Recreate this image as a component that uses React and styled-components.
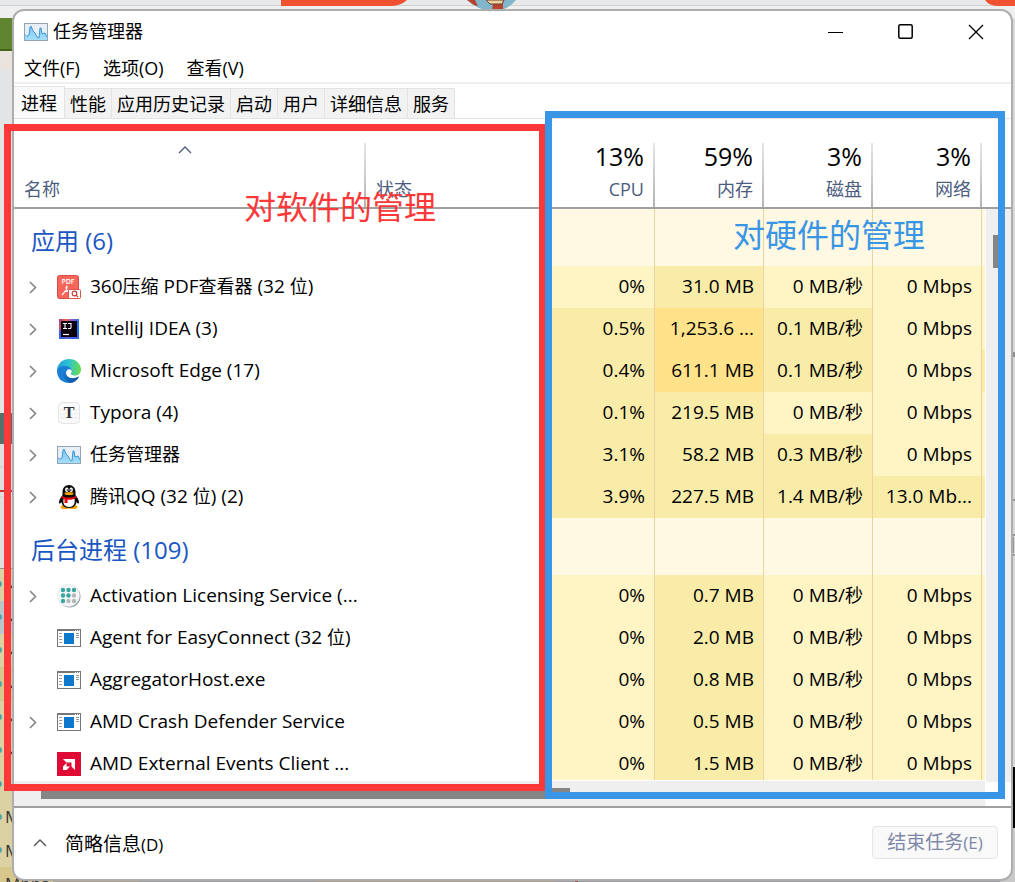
import React, { Component } from "react";
import styled, { createGlobalStyle } from "styled-components";

const GlobalStyle = createGlobalStyle`
  * {
    box-sizing: border-box;
  }
  body {
    margin: 0;
    background: #e3e4e6;
    font-family: "Open Sans", "Noto Sans CJK SC", sans-serif;
    font-size: 18px;
    color: #000;
  }
  button {
    font: inherit;
    color: inherit;
    background: none;
    border: 0;
    padding: 0;
  }
`;

const HEAT = {
  idle: "#fff8e3",
  low: "#fff4c4",
  mid: "#f9eca8",
  high: "#ffe28a"
};

const Desktop = styled.div`
  position: relative;
  height: 100vh;
  padding: 9px 2px 1px 12px;
  overflow: hidden;
`;

const Wallpaper = styled.svg`
  position: absolute;
  top: 0;
  left: 0;
`;

const Window = styled.main`
  position: relative;
  display: flex;
  flex-direction: column;
  height: 100%;
  background: #fff;
  border: 2px solid #adadad;
  border-radius: 12px;
  overflow: hidden;
`;

const TitleBar = styled.header`
  display: flex;
  align-items: center;
  height: 41px;
  flex: none;
  padding-left: 10px;
`;

const Title = styled.h1`
  flex: 1;
  margin: 0 0 0 5px;
  padding-bottom: 3px;
  font-size: 18px;
  font-weight: 400;
`;

const WindowButton = styled.button`
  display: grid;
  place-items: center;
  width: 70px;
  height: 41px;
`;

const MenuBar = styled.nav`
  display: flex;
  gap: 23px;
  flex: none;
  height: 32px;
  padding: 4px 10px 0;
  line-height: 24px;
  border-bottom: 2px solid #efefef;
`;

const MenuItem = styled.button`
  height: 24px;
  font-size: 18px;
  white-space: nowrap;
`;

const TabList = styled.div`
  display: flex;
  align-items: flex-end;
  flex: none;
  height: 35px;
  border-bottom: 1px solid #e3e3e3;
`;

const Tab = styled.button`
  height: ${props => (props.$active ? 32 : 30)}px;
  padding: 0 ${props => (props.$active ? 7 : 5)}px;
  line-height: ${props => (props.$active ? 28 : 30)}px;
  background: ${props => (props.$active ? "#f9f9f9" : "#f2f2f2")};
  border: 1px solid #e3e3e3;
  border-left-width: ${props => (props.$active ? 0 : 1)}px;
  border-bottom: 0;
  & + & {
    border-left: 0;
  }
`;

const Content = styled.section`
  display: flex;
  flex: 1;
  min-height: 0;
`;

const TableClip = styled.div`
  flex: 1;
  min-width: 0;
  overflow: hidden;
`;

const Table = styled.table`
  width: 100%;
  table-layout: fixed;
  border-collapse: separate;
  border-spacing: 0;
`;

const Col = styled.col`
  width: ${props => props.$width}px;
`;

const HeadCell = styled.th`
  height: 90px;
  padding: 0 11px 6px 10px;
  vertical-align: bottom;
  text-align: ${props => (props.$metric ? "right" : "left")};
  font-weight: 400;
  color: #4d5d80;
  line-height: 24px;
  border-bottom: 2px solid #a0a0a0;
  background: ${props =>
    props.$divider
      ? "linear-gradient(#e6e6e6, #b4b4b4) right bottom / 2px 64px no-repeat"
      : "none"};
`;

const SortButton = styled.button`
  display: flex;
  flex-direction: column;
  gap: 23px;
  width: 100%;
  padding-right: 10px;
  text-align: left;
  svg {
    align-self: center;
  }
`;

const Total = styled.div`
  margin-bottom: 5px;
  font-size: 25px;
  line-height: 32px;
  color: #000;
`;

const GroupName = styled.th`
  height: 57px;
  padding: 3px 0 0 17px;
  font-size: 24px;
  font-weight: 400;
  text-align: left;
  color: #1b57c2;
`;

const NameCell = styled.th`
  height: 42px;
  padding: 0 0 0 14px;
  font-size: 19px;
  font-weight: 400;
  line-height: 24px;
  text-align: left;
  white-space: nowrap;
`;

const NameLine = styled.div`
  display: flex;
  align-items: center;
  height: 24px;
`;

const NameText = styled.span`
  padding-bottom: 2px;
`;

const Expand = styled.button`
  display: grid;
  place-items: center;
  width: 10px;
  height: 24px;
`;

const Blank = styled.span`
  width: 10px;
`;

const IconBox = styled.span`
  display: grid;
  place-items: center;
  width: 24px;
  height: 24px;
  margin: 0 9px 0 19px;
`;

const Value = styled.td`
  padding: 0 9px 2px 0;
  font-size: 19px;
  line-height: 24px;
  text-align: right;
  white-space: nowrap;
  background: ${props => HEAT[props.$heat]};
  border-right: 1px solid #ead3a0;
`;

const Tail = styled.td`
  padding: 0;
  background: ${props => HEAT[props.$heat]};
`;

const Han = styled.span`
  font-size: 18px;
  line-height: 1;
`;

const VerticalBar = styled.div`
  flex: none;
  width: 26px;
  padding-top: 88px;
`;

const VerticalTrack = styled.div`
  display: flex;
  justify-content: center;
  height: 100%;
  padding-top: 26px;
  margin-left: 1px;
  background: #efefef;
`;

const VerticalThumb = styled.div`
  width: 12px;
  height: 33px;
  background: #858585;
`;

const VerticalHead = styled.div`
  height: 2px;
  background: #a0a0a0;
`;

const HorizontalTrack = styled.div`
  flex: none;
  height: 25px;
  margin: 1px 26px 0 0;
  padding: 7px 0 0 27px;
  background: #efefef;
`;

const HorizontalThumb = styled.div`
  width: 56%;
  height: 11px;
  background: #858585;
`;

const Footer = styled.footer`
  display: flex;
  align-items: center;
  justify-content: space-between;
  flex: none;
  height: 73px;
  padding: 0 13px 2px 18px;
  border-top: 2px solid #a0a0a0;
`;

const Details = styled.button`
  display: flex;
  align-items: center;
  gap: 17px;
`;

const FooterText = styled.span`
  font-size: 19px;
`;

const Latin = styled.span`
  font-size: 17px;
`;

const EndTask = styled.button`
  width: 126px;
  height: 33px;
  font-size: 19px;
  line-height: 30px;
  color: #7f88a6;
  background: #f9f9f9;
  border: 1px solid #e6e6e6;
  border-radius: 4px;
`;

const Frame = styled.div`
  position: absolute;
  border: 7px solid ${props => props.$color};
  pointer-events: none;
`;

const SoftwareFrame = styled(Frame)`
  top: 124px;
  bottom: 91px;
  left: 4px;
  width: 542px;
`;

const HardwareFrame = styled(Frame)`
  top: 111px;
  bottom: 83px;
  left: 545px;
  right: 10px;
`;

const Note = styled.div`
  position: absolute;
  top: ${props => props.$top}px;
  left: ${props => props.$left}px;
  font-size: 32px;
  line-height: 40px;
  white-space: nowrap;
  color: ${props => props.$color};
`;

const RED = "#fc3838";
const BLUE = "#3995e5";

const MonitorIcon = () => (
  <svg width="24" height="18" viewBox="0 0 24 18">
    <defs>
      <linearGradient id="wave" x1="0" y1="0" x2="0" y2="1">
        <stop offset="0" stopColor="#7cc6f2" />
        <stop offset="1" stopColor="#a4dffb" />
      </linearGradient>
    </defs>
    <rect x="0.5" y="0.5" width="23" height="17" fill="#e8eef5" stroke="#93a4b5" />
    <path
      d="M1 11.500l2 2 2-1.500 1-8 1-1 2 5 2 2 2 4 2 1 1-10 1 0 1 6 3-1 2 4v3H1z"
      fill="url(#wave)"
    />
    <path
      d="M1 11.500l2 2 2-1.500 1-8 1-1 2 5 2 2 2 4 2 1 1-10 1 0 1 6 3-1 2 4"
      fill="none"
      stroke="#3f97d6"
    />
  </svg>
);

const PdfIcon = () => (
  <svg width="24" height="24" viewBox="0 0 24 24">
    <rect x="0.5" y="0.5" width="21" height="23" rx="2" fill="#f8655b" stroke="#d64b43" />
    <text x="11" y="9" fontSize="7" fontWeight="600" fill="#fff" textAnchor="middle">
      PDF
    </text>
    <path
      d="M9 11c2 0 1 4-4 9M9 12c0 3 2 5 5 6M7 17l4-1"
      fill="none"
      stroke="#fff"
      strokeWidth="1.2"
    />
    <rect x="11.5" y="14.5" width="12" height="9" rx="1" fill="#fff" stroke="#d9534b" />
    <circle cx="17.5" cy="18.5" r="2.3" fill="none" stroke="#c8453f" strokeWidth="1.2" />
    <path d="M19 20l2 2" stroke="#c8453f" strokeWidth="1.2" />
  </svg>
);

const IdeaIcon = () => (
  <svg width="20" height="20" viewBox="0 0 20 20">
    <defs>
      <linearGradient id="idea" x1="0" y1="0" x2="1" y2="0.4">
        <stop offset="0" stopColor="#a13c8e" />
        <stop offset="0.35" stopColor="#f06a48" />
        <stop offset="0.55" stopColor="#8c5bc4" />
        <stop offset="1" stopColor="#087cfa" />
      </linearGradient>
    </defs>
    <rect width="20" height="20" fill="url(#idea)" />
    <path d="M0 9l7 11H0zM7 20l13-6v6z" fill="#3a5fe0" />
    <rect x="2" y="2" width="16" height="16" fill="#0c0210" />
    <path
      d="M4 4.500h4M6 4.500v5M4 9.500h4M9 4.500h3v4q0 1-1 1h-2"
      fill="none"
      stroke="#fff"
      strokeWidth="1.100"
    />
    <path d="M4 15.500h6" stroke="#fff" strokeWidth="1.200" />
  </svg>
);

const EdgeIcon = () => (
  <svg width="24" height="24" viewBox="0 0 24 24">
    <defs>
      <linearGradient id="edgeTop" x1="0" y1="0.3" x2="1" y2="0.4">
        <stop offset="0" stopColor="#1f9fe0" />
        <stop offset="0.5" stopColor="#2fc4cf" />
        <stop offset="1" stopColor="#6bdc4c" />
      </linearGradient>
      <linearGradient id="edgeLow" x1="0" y1="0" x2="1" y2="1">
        <stop offset="0" stopColor="#1c86dc" />
        <stop offset="1" stopColor="#0f4c9c" />
      </linearGradient>
    </defs>
    <path
      d="M0 12C0 5 5 0 12 0s12 5 12 10.500c0 4-3 6-6 6s-5-1-4-2.500c2-2 0-5.500-3.500-5.500C5 8.500 1 11 0 12z"
      fill="url(#edgeTop)"
    />
    <path
      d="M0 12c1-4 5-5.500 9-5 3 .3 5.500 2 6 5-2-3-6-2-6 2 0 4.500 6 7.500 13 3.500C20 22 16 24 12 24 5 24 0 19 0 12z"
      fill="#1b7fd4"
    />
    <path
      d="M9 9c-3 3-4 8 0 12 1.500 1.700 3 2.500 5 2.700 4-.5 6.500-3 8-6.200-7 3.500-13 1-13-3.500C9 12 9.500 10.500 11 10z"
      fill="url(#edgeLow)"
    />
  </svg>
);

const TyporaIcon = () => (
  <svg width="24" height="24" viewBox="0 0 24 24">
    <rect x="1.500" y="1.500" width="21" height="21" rx="4" fill="#fafafa" stroke="#e2e2e2" />
    <path d="M3 9h18M3 13h18M3 17h18" stroke="#ececec" />
    <text
      x="12"
      y="17"
      fontSize="16"
      fontWeight="700"
      fontFamily="Liberation Serif, serif"
      fill="#333"
      textAnchor="middle"
    >
      T
    </text>
  </svg>
);

const PenguinIcon = () => (
  <svg width="24" height="24" viewBox="0 0 24 24">
    <ellipse cx="8" cy="22" rx="4.500" ry="2" fill="#f5a300" />
    <ellipse cx="16" cy="22" rx="4.500" ry="2" fill="#f5a300" />
    <path
      d="M12 0C8 0 5.500 3 5.500 7v3C4 12 2 15 2 17.500c0 1.500 1 1.500 2.500-.5C5 20 7 23 12 23s7-3 7.500-6c1.500 2 2.500 2 2.500.5 0-2.500-2-5.500-3.500-7.500V7c0-4-2.500-7-6.500-7z"
      fill="#0a0a0a"
    />
    <path d="M6.500 14h11c1 5-1.500 8-5.500 8s-6.500-3-5.500-8z" fill="#fff" />
    <ellipse cx="9.800" cy="4.800" rx="1.700" ry="2.200" fill="#fff" />
    <ellipse cx="14.200" cy="4.800" rx="1.700" ry="2.200" fill="#fff" />
    <circle cx="10.300" cy="5" r="0.800" fill="#000" />
    <circle cx="13.700" cy="5" r="0.800" fill="#000" />
    <ellipse cx="12" cy="8.600" rx="4.500" ry="1.500" fill="#f5a300" />
    <path d="M5 11c4 2 10 2 14 0l.5 2c-3 1.500-6 2-9 1.700V18H7.500v-4L4.500 13z" fill="#e60012" />
  </svg>
);

const dots = [6, 11.5, 17];

const LicenseIcon = () => (
  <svg width="24" height="24" viewBox="0 0 24 24">
    <circle cx="12.500" cy="12.500" r="11" fill="#8f9da0" />
    <circle cx="11.500" cy="11.500" r="11" fill="#f6f7f8" stroke="#dde1e6" strokeWidth="0.800" />
    {dots.map((y, row) =>
      dots.map((x, col) => (
        <circle
          key={x + "-" + y}
          cx={x}
          cy={y}
          r="2.200"
          fill={row + col > 2 || (row === 2 && col > 0) ? "#b4b8ba" : "#38a69f"}
        />
      ))
    )}
  </svg>
);

const ExeIcon = () => (
  <svg width="24" height="18" viewBox="0 0 24 18">
    <rect x="0.500" y="0.500" width="23" height="17" fill="#fff" stroke="#777" />
    <path d="M1 1.500h16" stroke="#777" />
    <path d="M17 1.500h1M19 1.500h1M21 1.500h1" stroke="#777" />
    <path
      d="M2 4.500h3M2 7.500h3M2 10.500h3M2 13.500h3M19 4.500h3M19 6.500h3M19 8.500h3"
      stroke="#9a9a9a"
    />
    <rect x="7" y="4" width="10" height="11" fill="#0d78cc" />
  </svg>
);

const AmdIcon = () => (
  <svg width="24" height="24" viewBox="0 0 24 24">
    <rect width="24" height="24" fill="#df0b35" />
    <path d="M6 7h12v11l-3.500-3.500V10.500H9.500z" fill="#fff" />
    <path d="M9.500 11v3.500H13L9.500 18H6v-3.500z" fill="#fff" />
  </svg>
);

const Chevron = () => (
  <svg width="8" height="13" viewBox="0 0 8 13">
    <path d="M1 1l5.500 5.500L1 12" fill="none" stroke="#858585" strokeWidth="1.600" />
  </svg>
);

const Caret = ({ width, color }) => (
  <svg width={width} height="8" viewBox="0 0 14 8">
    <path d="M1 7l6-6 6 6" fill="none" stroke={color} strokeWidth="1.400" />
  </svg>
);

// Chinese runs are set one size under the latin ones
const Mixed = ({ text }) =>
  text
    .split(/([\u4e00-\u9fff]+)/)
    .map((part, i) => (i % 2 ? <Han key={i}>{part}</Han> : part));

const Backdrop = () => (
  <Wallpaper width="1015" height="882" viewBox="0 0 1015 882">
    <rect width="1015" height="882" fill="#e3e4e6" />
    <rect width="1015" height="5" fill="#e7e9ea" />
    <rect y="5" width="1015" height="1" fill="#d2d2d2" />
    <rect y="6" width="1015" height="12" fill="#efefef" />
    <path d="M281 0h126q-6 6-18 6H281zM985 0h30v6h-16q-10 0-14-6z" fill="#f0512f" />
    <path d="M467 0h49q-9 11-23 11T467 0z" fill="#7fb6c9" />
    <path d="M467 0h8l3 6-4-1zM493 3h10v8h-11z" fill="#b8432f" />
    <path d="M486 0h18l-2 4h-12z" fill="#efd3a0" stroke="#6b3e2c" />
    <rect y="18" width="16" height="33" fill="#5f8530" />
    <rect y="49" width="16" height="2" fill="#47641f" />
    <rect y="51" width="16" height="18" fill="#ebe4de" />
    <rect y="413" width="16" height="31" fill="#56716b" />
    <rect y="444" width="16" height="124" fill="#dedee1" />
    <path d="M0 467h16M0 497h16" stroke="#cfcfd2" />
    <rect y="490" width="16" height="2" fill="#cf3038" />
    <rect y="568" width="16" height="314" fill="#dcd1a3" />
    <rect y="568" width="16" height="1" fill="#8f8f8f" />
    <rect y="601" width="16" height="33" fill="#b9c6cc" />
    <rect y="667" width="16" height="34" fill="#d6c88c" />
    <rect y="867" width="53" height="15" fill="#d6c88c" />
    <rect x="53" y="878" width="86" height="4" fill="#a8a38a" />
    <rect x="139" y="878" width="876" height="4" fill="#9c9ca0" />
    <rect x="316" y="878" width="240" height="4" fill="#a39e85" />
    <rect x="575" y="878" width="3" height="4" fill="#a8434b" />
    {[584, 617, 650, 684, 717, 750, 784, 817, 850].map(y => (
      <circle key={y} cx="-1" cy={y} r="3" fill="#48a5ab" />
    ))}
    {[587, 620, 653, 687, 720, 753].map(y => (
      <path key={y} d={`M10 ${y + 1}l4-3`} stroke="#3a382c" strokeWidth="2" />
    ))}
    <text x="5" y="823" fontSize="17" fill="#333">
      M
    </text>
    <text x="5" y="857" fontSize="17" fill="#333">
      M
    </text>
    <text x="5" y="890" fontSize="17" fill="#333">
      Mbps
    </text>
    <rect x="1000" y="20" width="15" height="746" fill="#d8d8d8" />
    <rect x="1012" y="352" width="3" height="5" fill="#8e8e8e" />
    <path d="M1012 500h3M1012 512v10M1012 535h3M1013 537v16M1012 555h3" stroke="#555" />
    <rect x="1010" y="767" width="5" height="61" fill="#000" />
    <rect x="1000" y="828" width="15" height="54" fill="#c9c9c9" />
  </Wallpaper>
);

const TABS = ["进程", "性能", "应用历史记录", "启动", "用户", "详细信息", "服务"];

const METRICS = [
  { name: "CPU", total: "13%" },
  { name: "内存", total: "59%" },
  { name: "磁盘", total: "3%" },
  { name: "网络", total: "3%" }
];

const row = (name, icon, expandable, values, heats, tail = "low") => ({
  name,
  icon,
  expandable,
  values,
  heats,
  tail
});

const QUIET = ["low", "mid", "low", "low"];

const GROUPS = [
  {
    name: "应用 (6)",
    rows: [
      row("360压缩 PDF查看器 (32 位)", PdfIcon, true, ["0%", "31.0 MB", "0 MB/秒", "0 Mbps"], QUIET),
      row("IntelliJ IDEA (3)", IdeaIcon, true, ["0.5%", "1,253.6 ...", "0.1 MB/秒", "0 Mbps"], ["mid", "high", "mid", "low"]),
      row("Microsoft Edge (17)", EdgeIcon, true, ["0.4%", "611.1 MB", "0.1 MB/秒", "0 Mbps"], ["mid", "high", "mid", "low"], "mid"),
      row("Typora (4)", TyporaIcon, true, ["0.1%", "219.5 MB", "0 MB/秒", "0 Mbps"], ["mid", "mid", "low", "low"]),
      row("任务管理器", MonitorIcon, true, ["3.1%", "58.2 MB", "0.3 MB/秒", "0 Mbps"], ["mid", "mid", "mid", "low"]),
      row("腾讯QQ (32 位) (2)", PenguinIcon, true, ["3.9%", "227.5 MB", "1.4 MB/秒", "13.0 Mb..."], ["mid", "mid", "mid", "mid"], "mid")
    ]
  },
  {
    name: "后台进程 (109)",
    rows: [
      row("Activation Licensing Service (...", LicenseIcon, true, ["0%", "0.7 MB", "0 MB/秒", "0 Mbps"], QUIET),
      row("Agent for EasyConnect (32 位)", ExeIcon, false, ["0%", "2.0 MB", "0 MB/秒", "0 Mbps"], QUIET),
      row("AggregatorHost.exe", ExeIcon, false, ["0%", "0.8 MB", "0 MB/秒", "0 Mbps"], QUIET),
      row("AMD Crash Defender Service", ExeIcon, true, ["0%", "0.5 MB", "0 MB/秒", "0 Mbps"], QUIET),
      row("AMD External Events Client ...", AmdIcon, false, ["0%", "1.5 MB", "0 MB/秒", "0 Mbps"], QUIET)
    ]
  }
];

const ProcessRow = ({ item }) => {
  const Icon = item.icon;
  return (
    <tr>
      <NameCell scope="row">
        <NameLine>
          {item.expandable ? (
            <Expand aria-label={"展开 " + item.name}>
              <Chevron />
            </Expand>
          ) : (
            <Blank />
          )}
          <IconBox>
            <Icon />
          </IconBox>
          <NameText>
            <Mixed text={item.name} />
          </NameText>
        </NameLine>
      </NameCell>
      <td />
      {item.values.map((value, i) => (
        <Value key={i} $heat={item.heats[i]}>
          <Mixed text={value} />
        </Value>
      ))}
      <Tail $heat={item.tail} />
    </tr>
  );
};

export default class App extends Component {
  constructor(props) {
    super(props);
    this.state = {
      tab: TABS[0]
    };
  }

  render() {
    const { tab } = this.state;
    return (
      <Desktop>
        <GlobalStyle />
        <Backdrop />
        <Window>
          <TitleBar>
            <MonitorIcon />
            <Title>任务管理器</Title>
            <WindowButton aria-label="最小化">
              <svg width="16" height="16" viewBox="0 0 16 16">
                <path d="M0 8.500h15" stroke="#000" />
              </svg>
            </WindowButton>
            <WindowButton aria-label="最大化">
              <svg width="16" height="16" viewBox="0 0 16 16">
                <rect x="0.800" y="0.800" width="13.400" height="13.400" rx="1.500" fill="none" stroke="#000" strokeWidth="1.500" />
              </svg>
            </WindowButton>
            <WindowButton aria-label="关闭">
              <svg width="16" height="16" viewBox="0 0 16 16">
                <path d="M1 1l14 14M15 1L1 15" stroke="#000" strokeWidth="1.300" />
              </svg>
            </WindowButton>
          </TitleBar>
          <MenuBar>
            <MenuItem>文件(F)</MenuItem>
            <MenuItem>选项(O)</MenuItem>
            <MenuItem>查看(V)</MenuItem>
          </MenuBar>
          <TabList role="tablist">
            {TABS.map(name => (
              <Tab
                key={name}
                role="tab"
                aria-selected={name === tab}
                $active={name === tab}
                onClick={() => this._onSelectTab(name)}
              >
                {name}
              </Tab>
            ))}
          </TabList>
          <Content>
            <TableClip>
              <Table>
                <colgroup>
                  <Col $width={352} />
                  <col />
                  {METRICS.map(metric => (
                    <Col key={metric.name} $width={109} />
                  ))}
                  <Col $width={3} />
                </colgroup>
                <thead>
                  <tr>
                    <HeadCell scope="col" $divider>
                      <SortButton>
                        <Caret width={14} color="#4d5d80" />
                        <span>名称</span>
                      </SortButton>
                    </HeadCell>
                    <HeadCell scope="col">状态</HeadCell>
                    {METRICS.map(metric => (
                      <HeadCell key={metric.name} scope="col" $metric $divider>
                        <Total>{metric.total}</Total>
                        {metric.name}
                      </HeadCell>
                    ))}
                    <HeadCell as="td" />
                  </tr>
                </thead>
                {GROUPS.map(group => (
                  <tbody key={group.name}>
                    <tr>
                      <GroupName colSpan={2} scope="rowgroup">
                        {group.name}
                      </GroupName>
                      {METRICS.map(metric => (
                        <Value key={metric.name} $heat="idle" />
                      ))}
                      <Tail $heat="idle" />
                    </tr>
                    {group.rows.map(item => (
                      <ProcessRow key={item.name} item={item} />
                    ))}
                  </tbody>
                ))}
              </Table>
            </TableClip>
            <VerticalBar>
              <VerticalHead />
              <VerticalTrack>
                <VerticalThumb />
              </VerticalTrack>
            </VerticalBar>
          </Content>
          <HorizontalTrack>
            <HorizontalThumb />
          </HorizontalTrack>
          <Footer>
            <Details>
              <Caret width={16} color="#555" />
              <FooterText>
                简略信息<Latin>(D)</Latin>
              </FooterText>
            </Details>
            <EndTask disabled>
              结束任务<Latin>(E)</Latin>
            </EndTask>
          </Footer>
        </Window>
        <SoftwareFrame $color={RED} />
        <HardwareFrame $color={BLUE} />
        <Note $top={187} $left={244} $color={RED}>
          对软件的管理
        </Note>
        <Note $top={215} $left={733} $color={BLUE}>
          对硬件的管理
        </Note>
      </Desktop>
    );
  }

  _onSelectTab = tab => {
    this.setState({ tab });
  };
}
